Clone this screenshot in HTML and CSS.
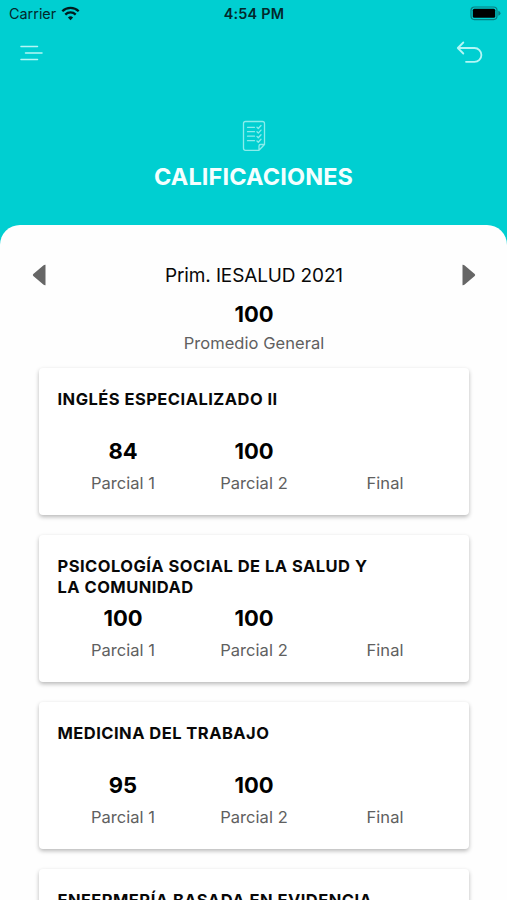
FILE: index.html
```html
<!DOCTYPE html>
<html lang="es">
<head>
<meta charset="utf-8">
<title>Calificaciones</title>
<link rel="stylesheet" href="styles.css">
</head>
<body>
<header class="header">
  <div class="status">
    <div class="carrier"><span>Carrier</span>
      <svg width="19" height="15" viewBox="0 0 19 15"><path d="M9.500 14.200 L6.900 11.500 A3.800 3.800 0 0 1 12.100 11.500 Z"/><path class="wave" d="M4.300 8.600 A7.400 7.400 0 0 1 14.700 8.600 M1.300 5.300 A11.600 11.600 0 0 1 17.700 5.300"/></svg>
    </div>
    <div class="time">4:54 PM</div>
    <svg class="battery" width="31" height="15" viewBox="0 0 31 15"><rect class="shell" x="1" y="1" width="26" height="12.600" rx="3.500"/><rect x="2.800" y="2.800" width="22.400" height="9" rx="1.500"/><path class="tip" d="M28.300 4.800 Q30.500 5.500 30.500 7.300 T28.300 9.800 Z"/></svg>
  </div>
  <nav class="nav">
    <svg width="24" height="20" viewBox="0 0 24 20"><path d="M1 3.500H17.500M5.500 10H22M1 16.500H17.500"/></svg>
    <svg class="back" width="28" height="24" viewBox="0 0 28 24"><path d="M7.300 1.500L1.800 7L7.300 12.500M2 7H18.500A6.800 6.800 0 0 1 18.500 20.800H10"/></svg>
  </nav>
  <svg class="sheet-icon" width="24" height="32" viewBox="0 0 24 32"><path d="M3.500 1.500H20.500Q22.500 1.500 22.500 3.500V24.500L17 30.300H3.500Q1.500 30.300 1.500 28.300V3.500Q1.500 1.500 3.500 1.500ZM17 30.300V26Q17 24.500 18.500 24.500H22.500"/><path class="rows" d="M5.500 7.300H12.500M5.500 11.700H12.500M5.500 16.200H12.500M5.500 20.700H12.500M15 7.200L16.300 8.500L19 5.500M15 11.800L16.300 13.100L19 10.100M15 16.400L16.300 17.700L19 14.700M15 21L16.300 22.300L19 19.300"/></svg>
  <h1>CALIFICACIONES</h1>
</header>
<main class="panel">
  <div class="period">
    <svg width="14" height="22" viewBox="0 0 14 22"><path d="M13.500 .8V21.200Q12.300 21.400 11.300 20.400L1.300 12Q.3 11 1.300 10L11.300 1.600Q12.300 .6 13.500 .8Z"/></svg>
    <span>Prim. IESALUD 2021</span>
    <svg width="14" height="22" viewBox="0 0 14 22"><path d="M.5 .8V21.200Q1.700 21.400 2.700 20.400L12.700 12Q13.700 11 12.700 10L2.700 1.600Q1.700 .6 .5 .8Z"/></svg>
  </div>
  <div class="average"><div class="grade">100</div><div class="label">Promedio General</div></div>
  <section class="card">
    <h2>INGLÉS ESPECIALIZADO II</h2>
    <div class="grades">
      <div><div class="grade">84</div><div class="label">Parcial 1</div></div>
      <div><div class="grade">100</div><div class="label">Parcial 2</div></div>
      <div><div class="grade"></div><div class="label">Final</div></div>
    </div>
  </section>
  <section class="card">
    <h2>PSICOLOGÍA SOCIAL DE LA SALUD Y<br>LA COMUNIDAD</h2>
    <div class="grades">
      <div><div class="grade">100</div><div class="label">Parcial 1</div></div>
      <div><div class="grade">100</div><div class="label">Parcial 2</div></div>
      <div><div class="grade"></div><div class="label">Final</div></div>
    </div>
  </section>
  <section class="card">
    <h2>MEDICINA DEL TRABAJO</h2>
    <div class="grades">
      <div><div class="grade">95</div><div class="label">Parcial 1</div></div>
      <div><div class="grade">100</div><div class="label">Parcial 2</div></div>
      <div><div class="grade"></div><div class="label">Final</div></div>
    </div>
  </section>
  <section class="card">
    <h2>ENFERMERÍA BASADA EN EVIDENCIA</h2>
  </section>
</main>
</body>
</html>
```
FILE: styles.css
```css
* { box-sizing: border-box; }
body {
  margin: 0;
  height: 900px;
  overflow: hidden;
  background: #00cfd1;
  font-family: Inter, "Liberation Sans", sans-serif;
  color: #080808;
}
svg { display: block; flex: none; }
h1, h2 { margin: 0; }
.header { height: 225px; }
.status {
  display: grid;
  grid-template-columns: 1fr auto 1fr;
  align-items: center;
  height: 27px;
  padding: 0 6px 0 9px;
  color: #03282b;
  font-size: 14.4px;
}
.carrier { display: flex; align-items: center; gap: 5px; }
.carrier svg { fill: #001c1e; }
.carrier .wave { fill: none; stroke: #001c1e; stroke-width: 2.3; }
.time { font-weight: 600; font-size: 14.4px; letter-spacing: .2px; margin-left: -2px; }
.battery { justify-self: end; fill: #000; }
.battery .shell { fill: none; stroke: #087f82; stroke-width: 1.2; }
.battery .tip { fill: #087f82; }
.nav {
  display: flex;
  justify-content: space-between;
  align-items: center;
  height: 52px;
  padding: 0 23px 0 20px;
}
.nav path, .sheet-icon path {
  fill: none;
  stroke: #b4f7f6;
  stroke-width: 1.5;
  stroke-linecap: round;
  stroke-linejoin: round;
}
.nav .back path { stroke-width: 1.8; }
.sheet-icon { margin: 41px auto 0; }
.sheet-icon path { stroke: #8aedec; stroke-width: 1.3; }
.header h1 {
  margin-top: 11px;
  text-align: center;
  color: #f4ffff;
  font-size: 23.5px;
  letter-spacing: .12px;
  line-height: 28px;
  font-weight: 700;
}
.panel {
  height: 675px;
  padding: 35px 38px 0 39px;
  overflow: hidden;
  background: #fefefe;
  border-radius: 20px 20px 0 0;
}
.period {
  display: flex;
  justify-content: space-between;
  align-items: center;
  height: 30px;
  margin: 0 -7px;
  font-size: 19px;
  letter-spacing: -.13px;
}
.period svg { fill: #666; }
.average { margin-top: 10px; height: 68px; text-align: center; }
.grade { height: 29px; line-height: 29px; font-size: 22px; font-weight: 700; color: #000; }
.label { height: 29px; line-height: 29px; font-size: 16.5px; letter-spacing: .05px; color: #606060; }
.card {
  height: 146.500px;
  margin-bottom: 20.500px;
  padding: 21px 18px 0 18.500px;
  background: #fff;
  border-radius: 4px;
  box-shadow: 0 2px 4px rgba(0, 0, 0, .28);
}
.card h2 {
  height: 48px;
  font-size: 16.5px;
  letter-spacing: .47px;
  line-height: 20.5px;
  font-weight: 700;
  white-space: nowrap;
}
.grades { display: grid; grid-template-columns: repeat(3, 131px); text-align: center; }
.grades .label { margin-top: 3px; }
```
